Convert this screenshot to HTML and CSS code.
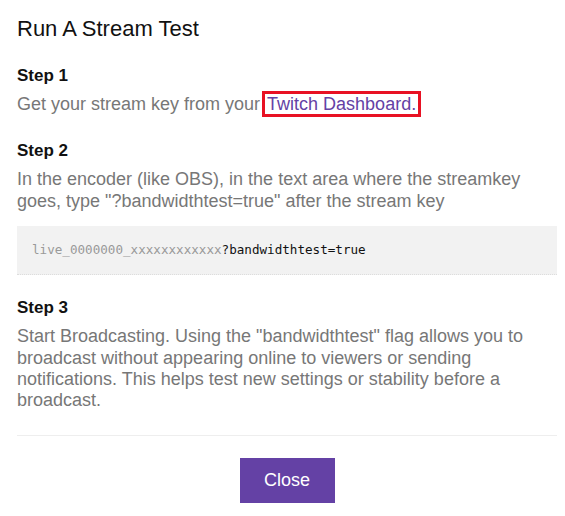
FILE: index.html
```html
<!DOCTYPE html>
<html>
<head>
    <meta charset="UTF-8">
    <title>Run A Stream Test</title>
    <link rel="stylesheet" href="styles.css">
</head>
<body>
    <div class="modal">
        <h1 class="modal-title">Run A Stream Test</h1>
        <div class="step step-first">
            <h3>Step 1</h3>
            <p>Get your stream key from your <a class="link marked" href="#">Twitch Dashboard.</a></p>
        </div>
        <div class="step">
            <h3>Step 2</h3>
            <p>In the encoder (like OBS), in the text area where the streamkey goes, type "?bandwidthtest=true" after the stream key</p>
            <pre class="code"><span class="code-muted">live_0000000_xxxxxxxxxxxx</span>?bandwidthtest=true</pre>
        </div>
        <div class="step">
            <h3>Step 3</h3>
            <p>Start Broadcasting. Using the "bandwidthtest" flag allows you to broadcast without appearing online to viewers or sending notifications. This helps test new settings or stability before a broadcast.</p>
        </div>
        <div class="modal-footer">
            <button class="btn-close">Close</button>
        </div>
    </div>
</body>
</html>
```

FILE: styles.css
```css
body {
    margin: 0;
    background-color: #fff;
    font-family: "Liberation Sans", Arial, sans-serif;
    color: #111;
}
.modal {
    padding: 16px 8px 0 17px;
}
.modal-title {
    font-size: 22px;
    font-weight: normal;
    margin: 0 0 24px 0;
}
.step {
    margin-bottom: 23px;
}
.step-first {
    margin-bottom: 26px;
}
.step h3 {
    font-size: 17px;
    margin: 0 0 8px 0;
}
.step p {
    font-size: 18px;
    line-height: 21.4px;
    color: #777;
    margin: 0;
}
.link {
    color: #6441a5;
    text-decoration: none;
}
.marked {
    outline: 3px solid #e81123;
    outline-offset: 0;
    padding: 0 2px;
}
.code {
    margin: 14px 0 0 0;
    padding: 15px;
    background-color: #f2f2f2;
    border-bottom: 1px dotted #ddd;
    font-family: "DejaVu Sans Mono", "Liberation Mono", monospace;
    font-size: 12.6px;
    line-height: 18px;
    color: #111;
}
.code-muted {
    color: #999;
}
.modal-footer {
    border-top: 1px solid #eee;
    margin-top: 6px;
    padding-top: 22px;
    text-align: center;
}
.btn-close {
    background-color: #6441a5;
    color: white;
    border: none;
    width: 95px;
    height: 45px;
    font-family: "Liberation Sans", Arial, sans-serif;
    font-size: 18px;
    cursor: pointer;
}
```
